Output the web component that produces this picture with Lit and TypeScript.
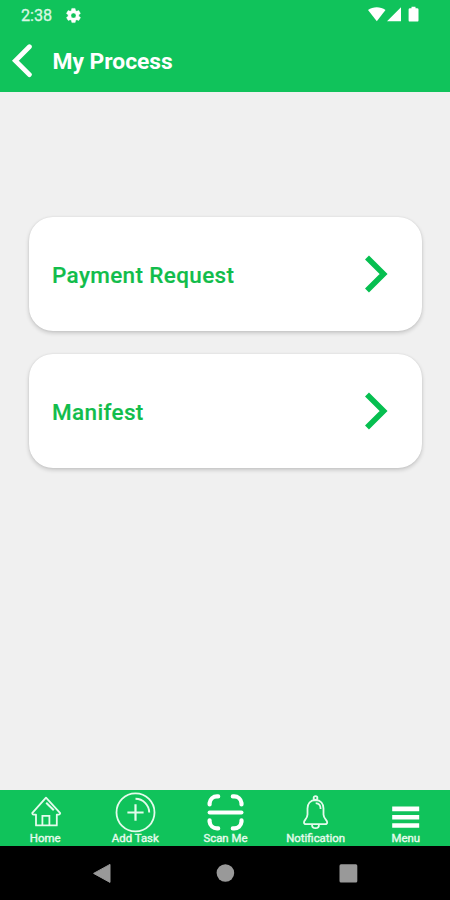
import { LitElement, html, css, svg } from "lit";
import { customElement } from "lit/decorators.js";

const homeIcon = svg`
  <path d="M7.2 21.2 L21 5.6 L35.2 21.2 Q34.8 22.6 33.8 22.6 H31.8 V33.4 H11 V22.6 H8.6 Q7.4 22.6 7.2 21.2 Z" stroke-linejoin="round"/>
  <path d="M17.4 33 V23.8 H24.4 V33"/>
  <path d="M21.2 10.8 L28.8 18.2" stroke-width="2"/>`;

const addIcon = svg`
  <circle cx="20.5" cy="20.4" r="19"/>
  <path d="M20.5 12.2 V28.8 M12.4 20.5 H28.6" stroke-width="2.2"/>
  <path d="M20.5 6.8 A13.8 13.8 0 0 1 34.2 20.4" stroke-width="1.9"/>`;

const scanIcon = svg`
  <g stroke="#fff" stroke-width="4.2" stroke-linecap="round">
    <path d="M4.6 12.5 V11 A7.4 7.4 0 0 1 12 4.4 H13.2"/>
    <path d="M27.8 4.4 H29 A7.4 7.4 0 0 1 36.5 11 V12.5"/>
    <path d="M4.6 28.3 V29.8 A7.4 7.4 0 0 0 12 36.4 H13.2"/>
    <path d="M27.8 36.4 H29 A7.4 7.4 0 0 0 36.5 29.8 V28.3"/>
    <path d="M4.6 20.4 H36.5" stroke-width="4"/>
  </g>`;

const bellIcon = svg`
  <circle cx="20.5" cy="6" r="1.9"/>
  <path d="M20.5 8 C15.2 8.1 12.5 12 12.5 16.5 V22.5 C12.5 26.4 9 28.2 9 30.2 C9 31.6 9.600 32.1 10.8 32.1 H30.2 C31.4 32.1 32.2 31.6 32.2 30.2 C32.2 28.2 28.5 26.4 28.5 22.5 V16.5 C28.5 12 25.8 8.1 20.5 8 Z"/>
  <path d="M17 32.4 C17 37.4 24 37.4 24 32.4"/>
  <path d="M20.7 11.2 C24 11.4 25.6 13.8 25.6 17"/>`;

const menuIcon = svg`
  <path d="M7.2 16.9 H34.2 M7.2 25.2 H34.2 M7.2 33.5 H34.2" stroke="#fff" stroke-width="4.6"/>`;

const tabs = [
  { label: "Home", icon: homeIcon },
  { label: "Add Task", icon: addIcon },
  { label: "Scan Me", icon: scanIcon },
  { label: "Notification", icon: bellIcon },
  { label: "Menu", icon: menuIcon },
];

@customElement("process-card")
class ProcessCard extends LitElement {
  static properties = { label: { type: String } };
  declare label: string;

  static styles = css`
    :host {
      display: flex;
      align-items: center;
      justify-content: space-between;
      box-sizing: border-box;
      height: 114px;
      padding: 1px 33px 0 23px;
      border-radius: 24px;
      background: #fff;
      color: #11bd4b;
      font-size: 22.5px;
      font-weight: 500;
      letter-spacing: 0.35px;
      box-shadow: 0 2px 4px rgba(0, 0, 0, 0.18), 0 0 2px rgba(0, 0, 0, 0.08);
    }
    .label { -webkit-text-stroke: 0.15px #11bd4b; }
    .chevron { margin-top: -1px; }
  `;

  render() {
    return html`
      <span class="label">${this.label}</span>
      <svg class="chevron" width="26" height="40" viewBox="0 0 26 40" fill="none" stroke="#06bf50" stroke-width="5.6">
        <path d="M4 3.4 L20.6 20 L4 36.6"/>
      </svg>`;
  }
}

@customElement("app-root")
class AppRoot extends LitElement {
  static styles = css`
    :host {
      display: flex;
      flex-direction: column;
      height: 900px;
      background: #f0f0f0;
      font-family: Roboto, "Liberation Sans", sans-serif;
      color: #fff;
    }
    .header { height: 92px; background: #10c35b; }
    .status { display: flex; align-items: center; height: 30px; padding: 0 30px 0 21px; }
    .time { width: 44px; font-size: 16.2px; color: #d8f7e3; -webkit-text-stroke: 0.3px #d8f7e3; }
    .signals { margin-left: auto; }
    .bar { display: flex; align-items: center; height: 62px; padding-left: 11px; }
    .title { margin-left: 18.5px; font-size: 22.8px; font-weight: 700; }
    .list {
      flex: 1;
      display: flex;
      flex-direction: column;
      gap: 23px;
      padding: 125px 28.5px 0 29px;
    }
    .tabs { display: grid; grid-template-columns: repeat(5, 90.2px); height: 56px; background: #10c35b; overflow: hidden; }
    .tab { display: flex; flex-direction: column; align-items: center; padding-top: 2px; }
    .tab-label { font-size: 11.4px; line-height: 13px; margin-top: -1px; color: #e4fbec; white-space: nowrap; -webkit-text-stroke: 0.4px #e4fbec; }
    .system { display: flex; align-items: center; justify-content: space-between; height: 54px; padding: 0 92px; background: #000; box-sizing: border-box; }
  `;

  render() {
    return html`
      <header class="header">
        <div class="status">
          <span class="time">2:38</span>
          <svg width="17" height="17" viewBox="0 0 24 24" fill="#fff">
            <path d="M19.4 13c.1-.3.1-.7.1-1s0-.7-.1-1l2.1-1.6c.2-.2.2-.4.1-.6l-2-3.5c-.1-.2-.4-.3-.6-.2l-2.5 1c-.5-.4-1.1-.7-1.7-1l-.4-2.6c0-.3-.2-.5-.5-.5h-4c-.3 0-.5.2-.5.4l-.4 2.7c-.6.2-1.1.6-1.7 1l-2.5-1c-.2-.1-.5 0-.6.2l-2 3.5c-.1.2-.1.5.1.6L4.5 11c0 .3-.1.7-.1 1s0 .7.1 1l-2.1 1.6c-.2.2-.2.4-.1.6l2 3.5c.1.2.4.3.6.2l2.5-1c.5.4 1.1.7 1.7 1l.4 2.7c0 .2.2.4.5.4h4c.3 0 .5-.2.5-.4l.4-2.7c.6-.3 1.2-.6 1.7-1l2.5 1c.2.1.5 0 .6-.2l2-3.5c.1-.2.1-.5-.1-.6zM12 15.6a3.6 3.6 0 1 1 0-7.2 3.6 3.6 0 0 1 0 7.2z" stroke="#fff" stroke-width="0.6"/>
          </svg>
          <svg class="signals" width="52" height="18" viewBox="0 0 52 18" fill="#fff">
            <path d="M0 4 C5 .2 12.5 .2 17.5 4 L8.8 15.2 Z"/>
            <path d="M33 1.2 V15.2 H19 Z"/>
            <path d="M43.5 .8 H47.5 V2.3 H49 Q50.5 2.3 50.5 3.5 V14.4 Q50.5 15.6 49 15.6 H42 Q40.6 15.6 40.6 14.4 V3.5 Q40.6 2.3 42 2.3 H43.5 Z"/>
          </svg>
        </div>
        <div class="bar">
          <svg width="23" height="34" viewBox="0 0 23 34" fill="none" stroke="#fff" stroke-width="4.8" stroke-linecap="round">
            <path d="M18.4 2.8 L4.4 16.7 L18.4 30.6"/>
          </svg>
          <span class="title">My Process</span>
        </div>
      </header>
      <main class="list">
        <process-card label="Payment Request"></process-card>
        <process-card label="Manifest"></process-card>
      </main>
      <nav class="tabs">
        ${tabs.map((t) => html`
          <div class="tab">
            <svg width="41" height="41" viewBox="0 0 41 41" fill="none" stroke="#e4fbec" stroke-width="1.8">${t.icon}</svg>
            <span class="tab-label">${t.label}</span>
          </div>`)}
      </nav>
      <footer class="system">
        <svg width="20" height="20" viewBox="0 0 20 20" fill="#999"><path d="M1.6 10.4 L18 1.4 V19.4 Z" stroke="#999" stroke-linejoin="round"/></svg>
        <svg width="20" height="20" viewBox="0 0 20 20" fill="#999"><circle cx="10.4" cy="10" r="8.8"/></svg>
        <svg width="20" height="20" viewBox="0 0 20 20" fill="#999"><rect x="1.5" y="1.3" width="17.8" height="18.2" rx="1.5"/></svg>
      </footer>`;
  }
}
